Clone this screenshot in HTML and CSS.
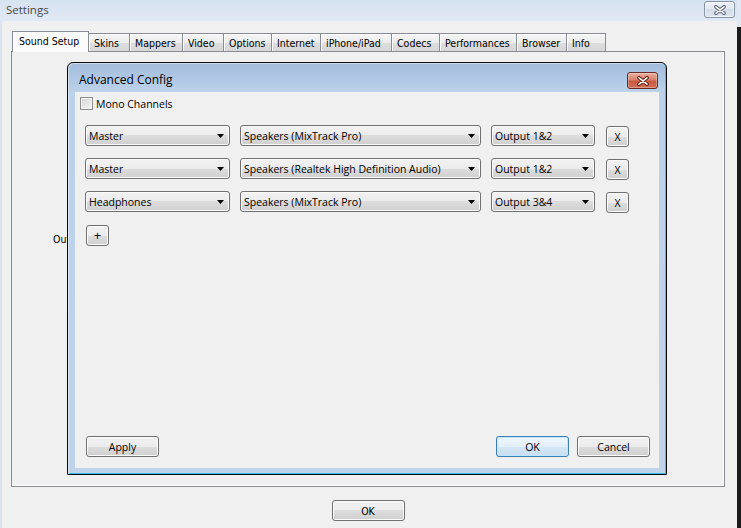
FILE: index.html
```html
<!DOCTYPE html>
<html lang="en">
<head>
<meta charset="utf-8">
<title>Settings</title>
<link rel="stylesheet" href="styles.css">
</head>
<body>
<div class="window">
  <div class="titlebar">
    <span class="title">Settings</span>
    <button class="win-close" aria-label="Close">
      <svg width="12" height="10" viewBox="0 0 12 10"><path d="M2 1.8 L10 8.2 M10 1.8 L2 8.2" stroke="#535c6b" stroke-width="3.6" stroke-linecap="round"/><path d="M2 1.8 L10 8.2 M10 1.8 L2 8.2" stroke="#ffffff" stroke-width="1.6" stroke-linecap="round"/></svg>
    </button>
  </div>
  <div class="content">
    <div class="tabs">
      <div class="tab active t-sound">Sound Setup</div>
      <div class="tab t-skins">Skins</div>
      <div class="tab t-mappers">Mappers</div>
      <div class="tab t-video">Video</div>
      <div class="tab t-options">Options</div>
      <div class="tab t-internet">Internet</div>
      <div class="tab t-iphone">iPhone/iPad</div>
      <div class="tab t-codecs">Codecs</div>
      <div class="tab t-perf">Performances</div>
      <div class="tab t-browser">Browser</div>
      <div class="tab t-info">Info</div>
    </div>
    <div class="panel">
      <div class="behind-label">Output</div>
      <div class="dialog">
        <div class="dlg-title">
          <span class="dlg-title-text">Advanced Config</span>
          <button class="dlg-close" aria-label="Close">
            <svg width="12" height="10" viewBox="0 0 12 10"><path d="M2 1.8 L10 8.2 M10 1.8 L2 8.2" stroke="#5e1a10" stroke-width="3.6" stroke-linecap="round"/><path d="M2 1.8 L10 8.2 M10 1.8 L2 8.2" stroke="#ffffff" stroke-width="1.6" stroke-linecap="round"/></svg>
          </button>
        </div>
        <div class="dlg-client">
          <label class="check"><span class="box"></span><span class="check-text">Mono Channels</span></label>
          <div class="routes">
            <div class="route">
              <div class="combo c-src"><span>Master</span><svg class="arrow" width="7" height="4" viewBox="0 0 7 4"><path d="M0 0H7L3.5 4Z" fill="#000"/></svg></div>
              <div class="combo c-dev"><span>Speakers (MixTrack Pro)</span><svg class="arrow" width="7" height="4" viewBox="0 0 7 4"><path d="M0 0H7L3.5 4Z" fill="#000"/></svg></div>
              <div class="combo c-out"><span>Output 1&amp;2</span><svg class="arrow" width="7" height="4" viewBox="0 0 7 4"><path d="M0 0H7L3.5 4Z" fill="#000"/></svg></div>
              <button class="btn btn-x">X</button>
            </div>
            <div class="route">
              <div class="combo c-src"><span>Master</span><svg class="arrow" width="7" height="4" viewBox="0 0 7 4"><path d="M0 0H7L3.5 4Z" fill="#000"/></svg></div>
              <div class="combo c-dev"><span>Speakers (Realtek High Definition Audio)</span><svg class="arrow" width="7" height="4" viewBox="0 0 7 4"><path d="M0 0H7L3.5 4Z" fill="#000"/></svg></div>
              <div class="combo c-out"><span>Output 1&amp;2</span><svg class="arrow" width="7" height="4" viewBox="0 0 7 4"><path d="M0 0H7L3.5 4Z" fill="#000"/></svg></div>
              <button class="btn btn-x">X</button>
            </div>
            <div class="route">
              <div class="combo c-src"><span>Headphones</span><svg class="arrow" width="7" height="4" viewBox="0 0 7 4"><path d="M0 0H7L3.5 4Z" fill="#000"/></svg></div>
              <div class="combo c-dev"><span>Speakers (MixTrack Pro)</span><svg class="arrow" width="7" height="4" viewBox="0 0 7 4"><path d="M0 0H7L3.5 4Z" fill="#000"/></svg></div>
              <div class="combo c-out"><span>Output 3&amp;4</span><svg class="arrow" width="7" height="4" viewBox="0 0 7 4"><path d="M0 0H7L3.5 4Z" fill="#000"/></svg></div>
              <button class="btn btn-x">X</button>
            </div>
          </div>
          <button class="btn btn-plus">+</button>
          <div class="dlg-footer">
            <button class="btn btn-wide">Apply</button>
            <span class="spacer"></span>
            <button class="btn btn-wide btn-default">OK</button>
            <button class="btn btn-wide">Cancel</button>
          </div>
        </div>
      </div>
    </div>
    <div class="bottom">
      <button class="btn btn-wide btn-classic">OK</button>
    </div>
  </div>
</div>
</body>
</html>
```
FILE: styles.css
```css
* { box-sizing: border-box; }
html, body { margin: 0; padding: 0; }
body {
  width: 741px;
  height: 528px;
  overflow: hidden;
  background: linear-gradient(to bottom, #e0e8f3 0, #e0e8f3 27px, #1b1b1b 27px);
  font-family: "Open Sans", "Liberation Sans", sans-serif;
  color: #000;
}
button { font: inherit; color: inherit; margin: 0; }

.window {
  width: 737px;
  height: 528px;
  display: flex;
  flex-direction: column;
  background: #f0f0f0;
}

.titlebar {
  height: 21px;
  flex: none;
  display: flex;
  align-items: flex-start;
  padding-left: 6px;
  background: linear-gradient(#d7e2f0, #e1e9f4);
}
.title {
  font: 11.5px/20px "Open Sans", sans-serif;
  color: #4a4a4a;
}
.win-close {
  margin: 1px 2px 0 auto;
  width: 31px;
  height: 17px;
  padding: 0;
  border: 1px solid #8592a8;
  border-radius: 3px;
  background: linear-gradient(#eef2f8, #e0e7f1 50%, #d3dce9 50%, #dde5ef);
  box-shadow: inset 0 0 0 1px rgba(255,255,255,0.6);
  display: flex;
  align-items: center;
  justify-content: center;
}

.content {
  flex: 1;
  border-left: 2px solid #dae2ee;
  padding: 10px 0 0 9px;
  display: flex;
  flex-direction: column;
}

/* tabs */
.tabs {
  display: flex;
  align-items: flex-end;
  height: 20px;
  margin-left: 1px;
  position: relative;
  z-index: 2;
  font: 10.5px "DejaVu Sans Condensed", "DejaVu Sans", sans-serif;
}
.tab {
  height: 18px;
  line-height: 18px;
  padding-left: 5px;
  border-top: 1px solid #898c95;
  border-right: 1px solid #898c95;
  background: linear-gradient(#f5f5f5, #ececec 50%, #dedede 52%, #d6d6d6);
  box-shadow: inset 1px 1px 0 #fbfbfb;
  white-space: nowrap;
  overflow: hidden;
}
.tab.active {
  height: 21px;
  line-height: 19px;
  margin-bottom: -1px;
  padding-left: 6px;
  border-left: 1px solid #898c95;
  background: #fbfbfb;
  box-shadow: none;
}
.t-sound { width: 77px; }
.t-skins { width: 41px; }
.t-mappers { width: 53px; }
.t-video { width: 41px; }
.t-options { width: 48px; }
.t-internet { width: 49px; }
.t-iphone { width: 71px; }
.t-codecs { width: 48px; }
.t-perf { width: 77px; }
.t-browser { width: 50px; }
.t-info { width: 39px; }

.panel {
  position: relative;
  width: 714px;
  height: 436px;
  flex: none;
  border: 1px solid #898c95;
  background: #f0f0f0;
  box-shadow: inset -1px -1px 0 #ffffff;
}
.behind-label {
  margin: 181px 0 0 41px;
  font: 10.5px/13px "DejaVu Sans Condensed", "DejaVu Sans", sans-serif;
}

/* floating dialog */
.dialog {
  position: absolute;
  left: 55px;
  top: 10px;
  width: 600px;
  height: 413px;
  border: 1px solid #0a0a0a;
  border-radius: 6px 6px 0 0;
  background: linear-gradient(#a2bcdb 0, #bcd2ea 29px, #bfd4eb 100%);
  box-shadow: inset 1px 1px 0 rgba(255,255,255,0.45), inset -1px -1px 0 #37c2ea;
  display: flex;
  flex-direction: column;
}
.dlg-title {
  height: 29px;
  flex: none;
  display: flex;
  align-items: flex-start;
  padding-left: 11px;
}
.dlg-title-text {
  font: 12px/24px "Open Sans", sans-serif;
  padding-top: 5px;
}
.dlg-close {
  margin: 9px 8px 0 auto;
  width: 31px;
  height: 17px;
  padding: 0;
  border: 1px solid #6b2a20;
  border-radius: 3px;
  background: linear-gradient(#eab0a2, #d9816c 45%, #c85a40 55%, #d0705a);
  box-shadow: inset 0 0 0 1px rgba(255,255,255,0.3);
  display: flex;
  align-items: center;
  justify-content: center;
}

.dlg-client {
  margin: 0 7px;
  height: 376px;
  flex: none;
  background: #f0f0f0;
  padding: 5px 9px 11px 5px;
  display: flex;
  flex-direction: column;
  font-size: 10.5px;
}

.check {
  display: flex;
  align-items: flex-start;
  gap: 3px;
  height: 13px;
}
.check-text { line-height: 15px; }
.box {
  width: 13px;
  height: 13px;
  border: 1px solid #8f8f8f;
  background: linear-gradient(135deg, #d4d4d4, #f7f7f7);
  box-shadow: inset 0 0 0 1px #f2f2f2;
}

.routes {
  margin: 15px 0 0 5px;
  display: flex;
  flex-direction: column;
  gap: 12px;
}
.route {
  display: flex;
  align-items: flex-start;
  height: 21px;
}
.combo {
  height: 21px;
  display: flex;
  align-items: center;
  padding: 2px 0 0 3px;
  border: 1px solid #707070;
  border-radius: 3px;
  background: linear-gradient(#f2f2f2, #ebebeb 50%, #dddddd 50%, #cfcfcf);
  box-shadow: inset 0 0 0 1px #fbfbfb;
  line-height: 17px;
  white-space: nowrap;
}
.combo .arrow { margin: -2px 5px 0 auto; flex: none; }
.c-src { width: 145px; }
.c-dev { width: 241px; margin-left: 10px; }
.c-out { width: 104px; margin-left: 10px; }

.btn {
  height: 21px;
  padding: 2px 0 0;
  border: 1px solid #707070;
  border-radius: 3px;
  background: linear-gradient(#f2f2f2, #ebebeb 50%, #dddddd 50%, #cfcfcf);
  box-shadow: inset 0 0 0 1px #fbfbfb;
  font-size: 10.5px;
  line-height: 17px;
  text-align: center;
}
.btn-x { width: 23px; margin: 1px 0 0 11px; }
.btn-plus {
  width: 23px;
  margin: 13px 0 0 6px;
  align-self: flex-start;
  font-size: 13px;
  padding-top: 0;
}
.btn-wide { width: 73px; }
.btn-default {
  border-color: #3c7fb1;
  background: linear-gradient(#eef6fc, #e3eff9 50%, #d3e6f5 50%, #c8def0);
  box-shadow: inset 0 0 0 1px #bfe6fb;
}

.dlg-footer {
  margin-top: auto;
  padding-left: 6px;
  display: flex;
  align-items: flex-end;
  gap: 8px;
}
.spacer { flex: 1; }

.bottom {
  width: 714px;
  margin-top: 13px;
  display: flex;
  justify-content: center;
}
.btn-classic {
  padding-top: 1px;
  font: 10.5px/18px "DejaVu Sans Condensed", "DejaVu Sans", sans-serif;
}
```
